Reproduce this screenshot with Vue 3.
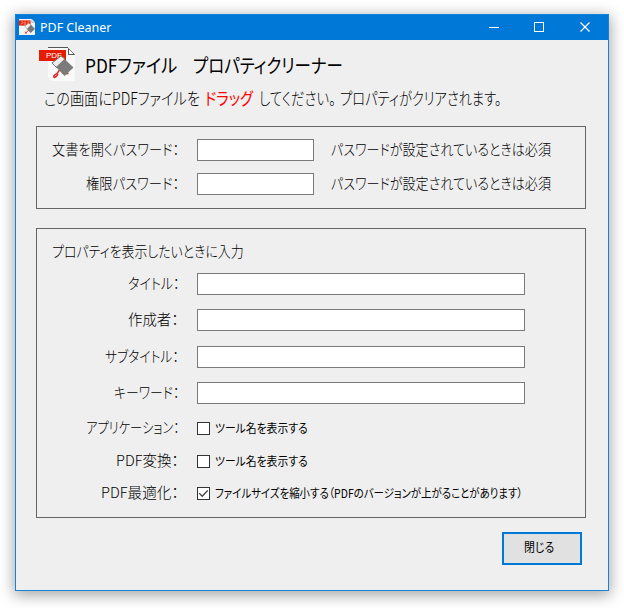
<script setup>
import { reactive } from 'vue'

const passwords = reactive([
  { label: '文書を開くパスワード：', width: 127, value: '' },
  { label: '権限パスワード：', width: 93, value: '' },
])
const fields = reactive([
  { label: 'タイトル：', width: 51, value: '' },
  { label: '作成者：', width: 51, value: '' },
  { label: 'サブタイトル：', width: 74, value: '' },
  { label: 'キーワード：', width: 65, value: '' },
])
const options = reactive([
  { label: 'アプリケーション：', width: 93, text: 'ツール名を表示する', textWidth: 93, on: false },
  { label: 'PDF変換：', width: 63, text: 'ツール名を表示する', textWidth: 93, on: false },
  { label: 'PDF最適化：', width: 78, text: 'ファイルサイズを縮小する（PDFのバージョンが上がることがあります）', textWidth: 308, on: true },
])

// Condenses a run of text horizontally to the given width.
const vFit = {
  mounted(el, { value }) {
    el.style.transform = `scaleX(${value / el.offsetWidth})`
  },
}
</script>

<template>
  <div class="desktop">
    <main class="window">
      <header class="titlebar">
        <svg class="app-icon" viewBox="0 0 36 34" preserveAspectRatio="none">
          <path d="M0 0H29L36 7V34H0Z" fill="#f4f4f4" />
          <path d="M29 0V7H36" fill="none" stroke="#777" />
          <rect y="3" width="26" height="11" fill="#e81e05" />
          <path d="M5 6h4v3H5v3M12 6v6h3V6zM20 12V6h4M20 9h3" fill="none" stroke="#f59a8c" stroke-width="1.5" />
          <path d="M14 31L23 22M14 27l3 4" stroke="#e02020" stroke-width="2" />
          <path d="M13 15L22 9L27 12L19 22Z" fill="#eee" stroke="#888" />
          <path d="M18 21L27 12L36 21L26 30Z" fill="#777" />
        </svg>
        <span v-fit="71" class="caption">PDF Cleaner</span>
        <svg class="controls" width="138" height="25" viewBox="0 0 138 25" fill="none" stroke="#fff">
          <path d="M19 12.5H29" />
          <rect x="64.5" y="7.5" width="9" height="9" />
          <path d="M110.5 7.5L119.5 16.5M119.5 7.5L110.5 16.5" stroke-width="1.2" />
        </svg>
      </header>

      <section class="heading">
        <svg class="logo" width="38" height="35" viewBox="0 0 38 35">
          <path d="M9 1H29L36 8V34H13L9 30Z" fill="#fafafa" />
          <path d="M9 .5H29M29.5 1V7.5H36" fill="none" stroke="#555" />
          <path d="M29 1L36 8" stroke="#777" />
          <rect y="3" width="27" height="11" fill="#e51c00" />
          <text x="7" y="10.5" class="logo-text">PDF</text>
          <path d="M14.5 30.5c0-3 2-2.500 4-4.500l2-3M15 30.500c2 0 3-1.500 4-3.500M23 26l3 .5h3.500" fill="none" stroke="#e32020" stroke-width="1.4" />
          <path d="M13 16L22 9L26 12L18 21Z" fill="#eee" stroke="#777" />
          <path d="M17 20L25.5 12L34.5 20.5L25.5 29Z" fill="#7b7b7b" />
        </svg>
        <h1>
          <span class="name"><span v-fit="92">PDFファイル</span></span>
          <span v-fit="150">プロパティクリーナー</span>
        </h1>
      </section>
      <p class="lead">
        <span class="slot first"><span v-fit="156">この画面にPDFファイルを</span></span>
        <span class="slot drag"><b v-fit="48">ドラッグ</b></span>
        <span class="slot sentence"><span v-fit="77">してください。</span></span>
        <span class="slot"><span v-fit="161">プロパティがクリアされます。</span></span>
      </p>

      <section class="group passwords">
        <label v-for="p in passwords" :key="p.label" class="row">
          <span class="label"><span v-fit="p.width">{{ p.label }}</span></span>
          <input v-model="p.value" class="short" type="password">
          <span class="note"><span v-fit="220">パスワードが設定されているときは必須</span></span>
        </label>
      </section>

      <section class="group properties">
        <div class="intro"><span v-fit="192">プロパティを表示したいときに入力</span></div>
        <label v-for="f in fields" :key="f.label" class="row">
          <span class="label"><span v-fit="f.width">{{ f.label }}</span></span>
          <input v-model="f.value" type="text">
        </label>
        <label v-for="o in options" :key="o.label" class="row">
          <span class="label"><span v-fit="o.width">{{ o.label }}</span></span>
          <input v-model="o.on" class="native" type="checkbox">
          <span class="check">
            <svg v-if="o.on" width="11" height="11" viewBox="0 0 11 11"><path d="M1.3 5.2L4.2 8.2L9.7 2.5" fill="none" stroke="#444" stroke-width="1.3" /></svg>
          </span>
          <span class="option"><span v-fit="o.textWidth">{{ o.text }}</span></span>
        </label>
      </section>

      <footer><button type="button"><span v-fit="30">閉じる</span></button></footer>
    </main>
  </div>
</template>

<style>
body { background: #fff; overflow: hidden; }
</style>

<style scoped>
* { box-sizing: border-box; }
.desktop { width: 624px; height: 608px; padding: 14px 15px; overflow: hidden; }
.window {
  width: 594px; height: 577px; border: 1px solid #1683d9; background: #efefef; color: #000;
  font: 300 15px/20px "Noto Sans CJK JP", sans-serif; font-feature-settings: "palt";
  box-shadow: 0 3px 14px 1px rgba(0, 0, 0, .36);
}
.window span, .window b { white-space: nowrap; }
span[style], b[style] { display: inline-block; transform-origin: left center; }
.titlebar { height: 25px; display: flex; align-items: center; background: #0078d7; color: #fff; padding-left: 3px; }
.app-icon { width: 16px; height: 16px; margin: 0 5px 1px 0; }
.caption { font: 13px/20px "Noto Sans", sans-serif; padding-bottom: 2px; }
.controls { margin-left: auto; }
.heading { display: flex; height: 48px; padding: 7px 0 0 23px; }
.logo { flex: none; margin-right: 8px; }
.logo-text { font: 8px "Liberation Sans", sans-serif; fill: #fff; }
h1 { display: flex; margin: 3px 0 0; font-size: 19px; line-height: 30px; font-weight: 400; white-space: nowrap; }
.name { width: 108px; }
.lead { height: 24px; display: flex; margin: 0; padding-left: 28px; font-size: 17px; line-height: 20px; }
.slot { width: 165px; flex: none; }
.slot.first { width: 161px; }
.slot.drag { width: 54px; color: #f00; }
.slot.sentence { width: 81px; }
.group { width: 550px; margin-left: 20px; border: 1px solid #666; }
.passwords { height: 83px; margin-top: 14px; padding-top: 6px; }
.row { height: 34px; display: flex; align-items: center; }
.label { width: 142px; margin-right: 18px; padding-bottom: 2px; display: flex; justify-content: flex-end; flex: none; }
.label > span { transform-origin: right center; }
input { width: 328px; height: 22px; margin: 0; padding: 0 3px; border: 1px solid #7a7a7a; border-radius: 0; background: #fff; outline: 0; }
.short { width: 117px; }
.note { margin-left: 17px; padding-bottom: 2px; }
.properties { height: 290px; margin-top: 19px; display: grid; grid-template-rows: 37px 36px 36px 37px 36px 34px 32px 32px; }
.properties .row { height: auto; }
.intro { padding: 12px 0 0 15px; }
.native { position: absolute; opacity: 0; width: 0; height: 0; padding: 0; border: 0; }
.check { width: 13px; height: 13px; border: 1px solid #333; background: #fff; flex: none; }
.check svg { display: block; }
.option { margin-left: 5px; padding-bottom: 1px; font-size: 12px; font-weight: 400; width: 320px; }
footer { display: flex; justify-content: flex-end; padding: 14px 26px 0 0; }
button { width: 80px; height: 33px; padding: 0 2px 3px 0; border: 2px solid #0078d7; background: #e1e1e1; font: inherit; font-size: 12px; font-weight: 400; color: #000; display: flex; align-items: center; justify-content: center; }
button > span { transform-origin: center; }
</style>
